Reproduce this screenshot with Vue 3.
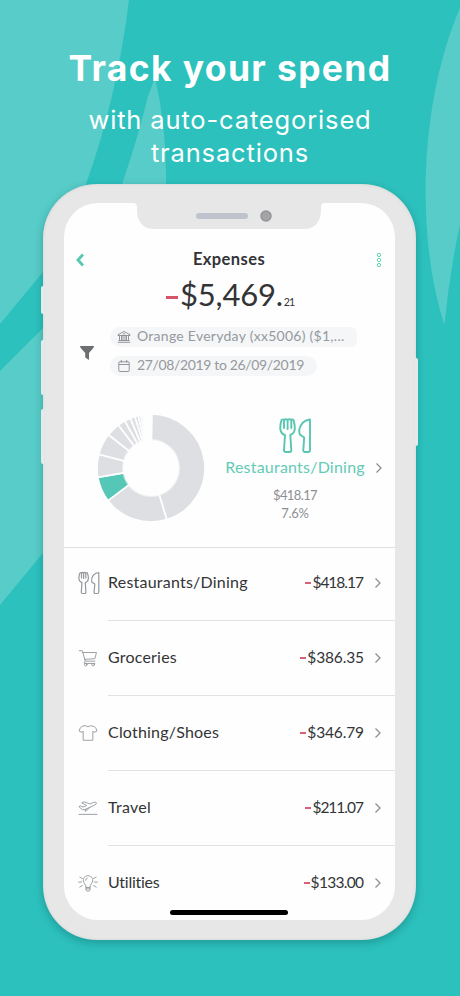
<script setup>
const rows = [
  { icon: 'dining', name: 'Restaurants/Dining', amount: '$418.17', spacing: 0.22, amountSpacing: -1 },
  { icon: 'cart', name: 'Groceries', amount: '$386.35', spacing: 0.2, amountSpacing: -0.15 },
  { icon: 'shirt', name: 'Clothing/Shoes', amount: '$346.79', spacing: 0.2, amountSpacing: -0.15 },
  { icon: 'plane', name: 'Travel', amount: '$211.07', spacing: 0.25, amountSpacing: -1 },
  { icon: 'bulb', name: 'Utilities', amount: '$133.00', spacing: -0.25, amountSpacing: -0.7 },
]

// Slice boundaries in degrees, clockwise from twelve o'clock.
const stops = [1, 163, 232.8, 260, 284.8, 308, 322.8, 331, 337.5, 342.6, 346.3, 349.2, 351.6, 353.4]
const outer = 54
const inner = 27
const point = (r, deg) => {
  const a = (deg * Math.PI) / 180
  return `${(r * Math.sin(a)).toFixed(2)} ${(-r * Math.cos(a)).toFixed(2)}`
}
const slices = stops.slice(1).map((end, i) => {
  const start = stops[i]
  const large = end - start > 180 ? 1 : 0
  return {
    active: i === 2,
    d: `M${point(outer, start)}A${outer} ${outer} 0 ${large} 1 ${point(outer, end)}L${point(inner, end)}A${inner} ${inner} 0 ${large} 0 ${point(inner, start)}Z`,
  }
})
</script>

<template>
  <main class="poster">
    <svg class="backdrop" viewBox="0 0 460 996" aria-hidden="true">
      <path d="M0 0H129Q117 98 86 184Q70 236 43 272L0 324Z" />
      <path d="M155 78Q167 128 166 184C164 330 115 464 43 553L0 605V371L43 328C82 281 108 232 122 184Q138 138 148 96Z" />
      <path d="M460 8C420 100 415 235 444.500 325Q449 275 460 225Z" />
    </svg>

    <header class="headline">
      <h1>Track your spend</h1>
      <p class="line-a">with auto-categorised</p>
      <p class="line-b">transactions</p>
    </header>

    <section class="phone">
      <i class="key mute"></i><i class="key vol-up"></i><i class="key vol-down"></i><i class="key power"></i>
      <svg class="notch" viewBox="0 0 192 27" aria-hidden="true">
        <path d="M0 0Q4 0 4 4V8Q5 26 22 26H170Q187 26 188 8V4Q188 0 192 0Z" fill="#e7e7e7" />
        <rect x="63" y="10" width="52" height="6" rx="3" fill="#bfc3cc" />
        <circle cx="133" cy="13" r="5" fill="#a3a4a6" stroke="#939497" stroke-width="1.500" />
      </svg>

      <div class="screen">
        <div class="bar">
          <svg class="back" viewBox="0 0 10 14"><path d="M8 1.500L3 7L8 12.500" /></svg>
          <h2>Expenses</h2>
          <svg class="more" viewBox="0 0 6 16"><circle cx="3" cy="3" r="1.700" /><circle cx="3" cy="8" r="1.700" /><circle cx="3" cy="13" r="1.700" /></svg>
        </div>
        <div class="total"><span class="dash"></span><span class="big">$5,469.</span><span class="cents">21</span></div>

        <div class="filters">
          <svg class="funnel" viewBox="0 0 16 16"><path d="M1 1H15L14.500 2.800L10 8V15L6.200 12.500V8L1.500 2.800Z" /></svg>
          <div class="pills">
            <div class="pill account">
              <svg viewBox="0 0 14 14"><path d="M1 4.600L7 1.500L13 4.600V5.500H1ZM2.500 5.500V10.500M4.500 5.500V10.500M6 5.500V10.500M8 5.500V10.500M9.500 5.500V10.500M11.500 5.500V10.500M1.500 10.500H12.500M.7 12.300H13.300M5.800 3.900H8.200" /></svg>
              <span>Orange Everyday (xx5006) ($1,...</span>
            </div>
            <div class="pill dates">
              <svg viewBox="0 0 14 14"><path d="M2.800 2.800H11.200Q12.200 2.800 12.200 3.800V11.500Q12.200 12.500 11.200 12.500H2.800Q1.800 12.500 1.800 11.500V3.800Q1.800 2.800 2.800 2.800ZM1.800 5.500H12.200M4.300 1V3.500M9.700 1V3.500" /></svg>
              <span>27/08/2019 to 26/09/2019</span>
            </div>
          </div>
        </div>

        <div class="summary">
          <svg class="donut" viewBox="-55 -55 110 110">
            <path v-for="(s, i) in slices" :key="i" :d="s.d" :class="{ active: s.active }" />
            <circle r="29" />
          </svg>
          <div class="focus">
            <svg class="focus-icon" viewBox="0 0 34 36">
              <path d="M2.500 2Q1 7 1.300 11Q2 16 6 17L5 32Q5 34 7 34H10.500Q12.300 34 12.300 32L11.300 17Q15.500 15.500 15.800 11Q16 7 14.500 2Q13 .7 12.300 2V10M2.500 2Q4 .7 5 2V10M5 2Q6.800 .5 8.600 2V11M8.600 2Q10.500 .5 12.300 2" />
              <path d="M31 1.500V32Q31 34 29 34H26Q24.200 34 24.300 32L25.200 19.500L20.800 16.500C18.800 10 23 2.500 31 1.500Z" />
            </svg>
            <div class="focus-name">Restaurants/Dining</div>
            <div class="focus-sum">$418.17</div>
            <div class="focus-share">7.6%</div>
          </div>
          <svg class="chevron" viewBox="0 0 8 12"><path d="M1.500 1.500L6 6L1.500 10.500" /></svg>
        </div>

        <ul class="list">
          <li v-for="row in rows" :key="row.name">
            <svg v-if="row.icon === 'dining'" class="icon" viewBox="0 0 22 24">
              <path d="M2 2Q.5 5 1 8Q1.300 10.700 4 11.500L3.300 21Q3.300 22.500 4.500 22.500H6.700Q8 22.500 7.900 21L7.300 11.500Q10 10.700 10.300 8Q10.600 5 9.300 2Q8.300 1 7.800 2V7M2 2Q3 1 3.500 2V7M3.500 2Q4.600 1 5.600 2V7.500M5.600 2Q6.700 1 7.800 2" />
              <path d="M20.800 1.500V21Q20.800 22.500 19.600 22.500H17.300Q16 22.500 16.100 21L16.800 13L13.700 11C13 6 15.500 2.200 20.800 1.500Z" />
            </svg>
            <svg v-else-if="row.icon === 'cart'" class="icon" viewBox="0 0 22 24">
              <path d="M1.500 4H4.800L8 15.500H18.500M5.300 6H20.300L18.500 12.800L7.200 13.500M8 15.500Q6 16.500 7 18H18.500" /><circle cx="8.500" cy="19.300" r="1.400" /><circle cx="16.700" cy="19.300" r="1.400" />
            </svg>
            <svg v-else-if="row.icon === 'shirt'" class="icon" viewBox="0 0 22 24">
              <path d="M8 4Q11 6.500 14 4L18 5Q20 6 20.900 9.800L17.500 11.300L16.300 10V20H5.700V10L4.500 11.300L1.100 9.800Q2 6 4 5Z" />
            </svg>
            <svg v-else-if="row.icon === 'plane'" class="icon" viewBox="0 0 22 24">
              <path d="M1.500 10.200L3 9.700L5.500 11L9.500 9.300L4.200 6.300L6.300 5.200L13.300 7.500L17 5.800Q19.500 5.100 20.300 6.300Q20.300 7.900 18 9L8 13.500Q4.500 14.700 3.500 13.200ZM13 11.300L9.500 15L7.700 15.500L8.700 13.200M1 19H21" />
            </svg>
            <svg v-else class="icon" viewBox="0 0 22 24">
              <path d="M8.800 16.500Q8.800 14.500 7.500 13C3.800 8.800 6.500 4 11 4S18.200 8.800 14.500 13Q13.200 14.500 13.200 16.500ZM8.800 18.500H13.200M8.800 16.500V19.500L10 21H12L13.200 19.500V16.500M8.300 9Q8.300 7 10.300 6.600M.7 11H4M18 11H21.300M2 5.500L4.800 7M20 5.500L17.200 7M2 16.500L4.800 14.700M20 16.500L17.200 14.700" />
            </svg>
            <div class="entry">
              <span class="name" :style="{ letterSpacing: row.spacing + 'px' }">{{ row.name }}</span>
              <span class="dash"></span>
              <span class="amount" :style="{ letterSpacing: row.amountSpacing + 'px', marginRight: -row.amountSpacing + 'px' }">{{ row.amount }}</span>
              <svg class="chevron" viewBox="0 0 8 12"><path d="M1.500 1.500L6 6L1.500 10.500" /></svg>
            </div>
          </li>
        </ul>
      </div>
      <i class="home"></i>
    </section>
  </main>
</template>

<style>
body { margin: 0; }
</style>

<style scoped>
* { box-sizing: border-box; }
svg { display: block; flex: none; }
h1, h2, p, ul { margin: 0; padding: 0; font-weight: inherit; }
.poster {
  position: relative;
  width: 460px;
  height: 996px;
  overflow: hidden;
  background: #2cc1bd;
  font-family: Lato, "Liberation Sans", sans-serif;
}
.backdrop { position: absolute; inset: 0; fill: #57ccc8; }
.headline {
  position: relative;
  height: 184px;
  padding-top: 47px;
  color: #fff;
  text-align: center;
  font-family: Inter, "Open Sans", sans-serif;
  white-space: nowrap;
}
.headline h1 { font-size: 35.500px; line-height: 44px; font-weight: 700; letter-spacing: 1.350px; }
.headline p { font-size: 25.500px; line-height: 33px; letter-spacing: .85px; }
.headline .line-a { margin-top: 12px; }
.phone {
  position: relative;
  width: 373px;
  height: 756px;
  margin-left: 43px;
  padding: 19px 21px;
  border-radius: 54px;
  background: #e7e7e7;
  box-shadow: 0 3px 9px rgba(0, 70, 75, .32), inset 0 0 3px rgba(160, 165, 165, .35);
}
.key { position: absolute; left: -2px; width: 3px; border-radius: 2px 0 0 2px; background: #e3ebea; }
.mute { top: 102px; height: 28px; }
.vol-up { top: 156px; height: 55px; }
.vol-down { top: 225px; height: 55px; }
.power { top: 174px; left: auto; right: -2px; height: 88px; border-radius: 0 2px 2px 0; }
.notch { position: absolute; z-index: 1; left: 90px; top: 19px; width: 192px; height: 27px; }
.screen {
  height: 717px;
  overflow: hidden;
  border-radius: 34px;
  background: #fefefe;
  color: #333436;
}
.home { position: absolute; left: 127px; top: 726px; width: 118px; height: 5px; border-radius: 3px; background: #000; }
.bar { display: flex; align-items: center; justify-content: space-between; height: 32px; margin-top: 40px; padding: 0 13px 0 11px; }
.bar h2 { padding-right: 3px; font-size: 16.500px; line-height: 24px; font-weight: 700; letter-spacing: .4px; }
.back { width: 10px; height: 14px; margin-top: 2px; fill: none; stroke: #5bc8b4; stroke-width: 2.900; }
.more { width: 6px; height: 16px; margin-top: 2px; fill: none; stroke: #5fd6b0; stroke-width: 1; }
.total { display: flex; align-items: baseline; height: 42px; padding-left: 102px; line-height: 42px; margin-top: -2px; }
.dash { flex: none; background: #d9607a; }
.total .dash { width: 12px; height: 3px; margin-right: 2px; background: #d6546b; transform: translateY(-7px); }
.big { font-size: 31px; letter-spacing: -.2px; }
.cents { font-size: 10.500px; margin-left: 1px; letter-spacing: -1px; }
.filters { display: flex; align-items: center; height: 50px; margin-top: 11px; padding-left: 15px; }
.funnel { width: 16px; height: 16px; margin: 3px 15px 0 0; fill: #6c6e71; }
.pills { display: flex; flex-direction: column; gap: 9px; }
.pill { display: flex; align-items: center; gap: 6px; height: 20px; padding-left: 7px; border-radius: 10px; background: #f4f6f7; color: #96999e; font-size: 14px; line-height: 20px; white-space: nowrap; }
.pill svg { width: 14px; height: 14px; fill: none; stroke: #888b8f; stroke-width: .9; }
.pill span { height: 20px; margin-top: -2px; }
.account { width: 247px; border-radius: 10px 6px 6px 10px; letter-spacing: .27px; }
.dates { width: 207px; letter-spacing: -.35px; }
.summary { display: flex; height: 171px; padding-left: 32px; }
.donut { width: 110px; height: 110px; margin-top: 36.500px; margin-left: -.5px; }
.donut path { fill: #dddfe3; stroke: #fefefe; stroke-width: 1.700; }
.donut .active { fill: #55c7b7; }
.donut circle { fill: #fefefe; opacity: .6; }
.focus { display: flex; flex-direction: column; align-items: center; width: 140px; margin-left: 19.500px; color: #8d9094; white-space: nowrap; }
.focus-icon { width: 34px; height: 36px; margin: 42px 0 0 2px; fill: none; stroke: #58c6b1; stroke-width: 1.900; stroke-linejoin: round; stroke-linecap: round; }
.focus-name { margin-top: 2px; color: #63cbb5; font-size: 16px; line-height: 22px; letter-spacing: .22px; }
.focus-sum { margin-top: 8px; font-size: 13px; line-height: 18px; letter-spacing: -.6px; }
.focus-share { font-size: 13px; line-height: 18px; letter-spacing: -.3px; }
.chevron { width: 8px; height: 12px; fill: none; stroke: #8d9094; stroke-width: 1.300; }
.summary .chevron { margin: 86px 0 0 10px; }
.list { border-top: 1px solid #dedfe0; list-style: none; }
.list li { display: flex; align-items: center; height: 75.250px; padding-left: 14px; }
.list li:first-child { height: 72.500px; padding-left: 13.500px; }
.icon { width: 20px; height: 22px; margin: 0 10px 1px 0; fill: none; stroke: #94979b; stroke-width: 1; stroke-linejoin: round; stroke-linecap: round; }
li:first-child .icon { width: 22px; height: 24px; margin: 0 8.500px 2px 0; stroke-width: 1.200; }
.entry { display: flex; flex: 1; align-items: center; height: 100%; padding: 0 13px 2px 0; border-bottom: 1px solid #e1e2e3; font-size: 16px; line-height: 22px; }
li:first-child .entry { padding-bottom: 4px; }
.name { flex: 1; }
.amount { font-size: 15.500px; }
.entry .dash { width: 6px; height: 2px; margin: 2px 1px 0 0; }
.entry .chevron { margin: 2px 0 0 10px; }
</style>
